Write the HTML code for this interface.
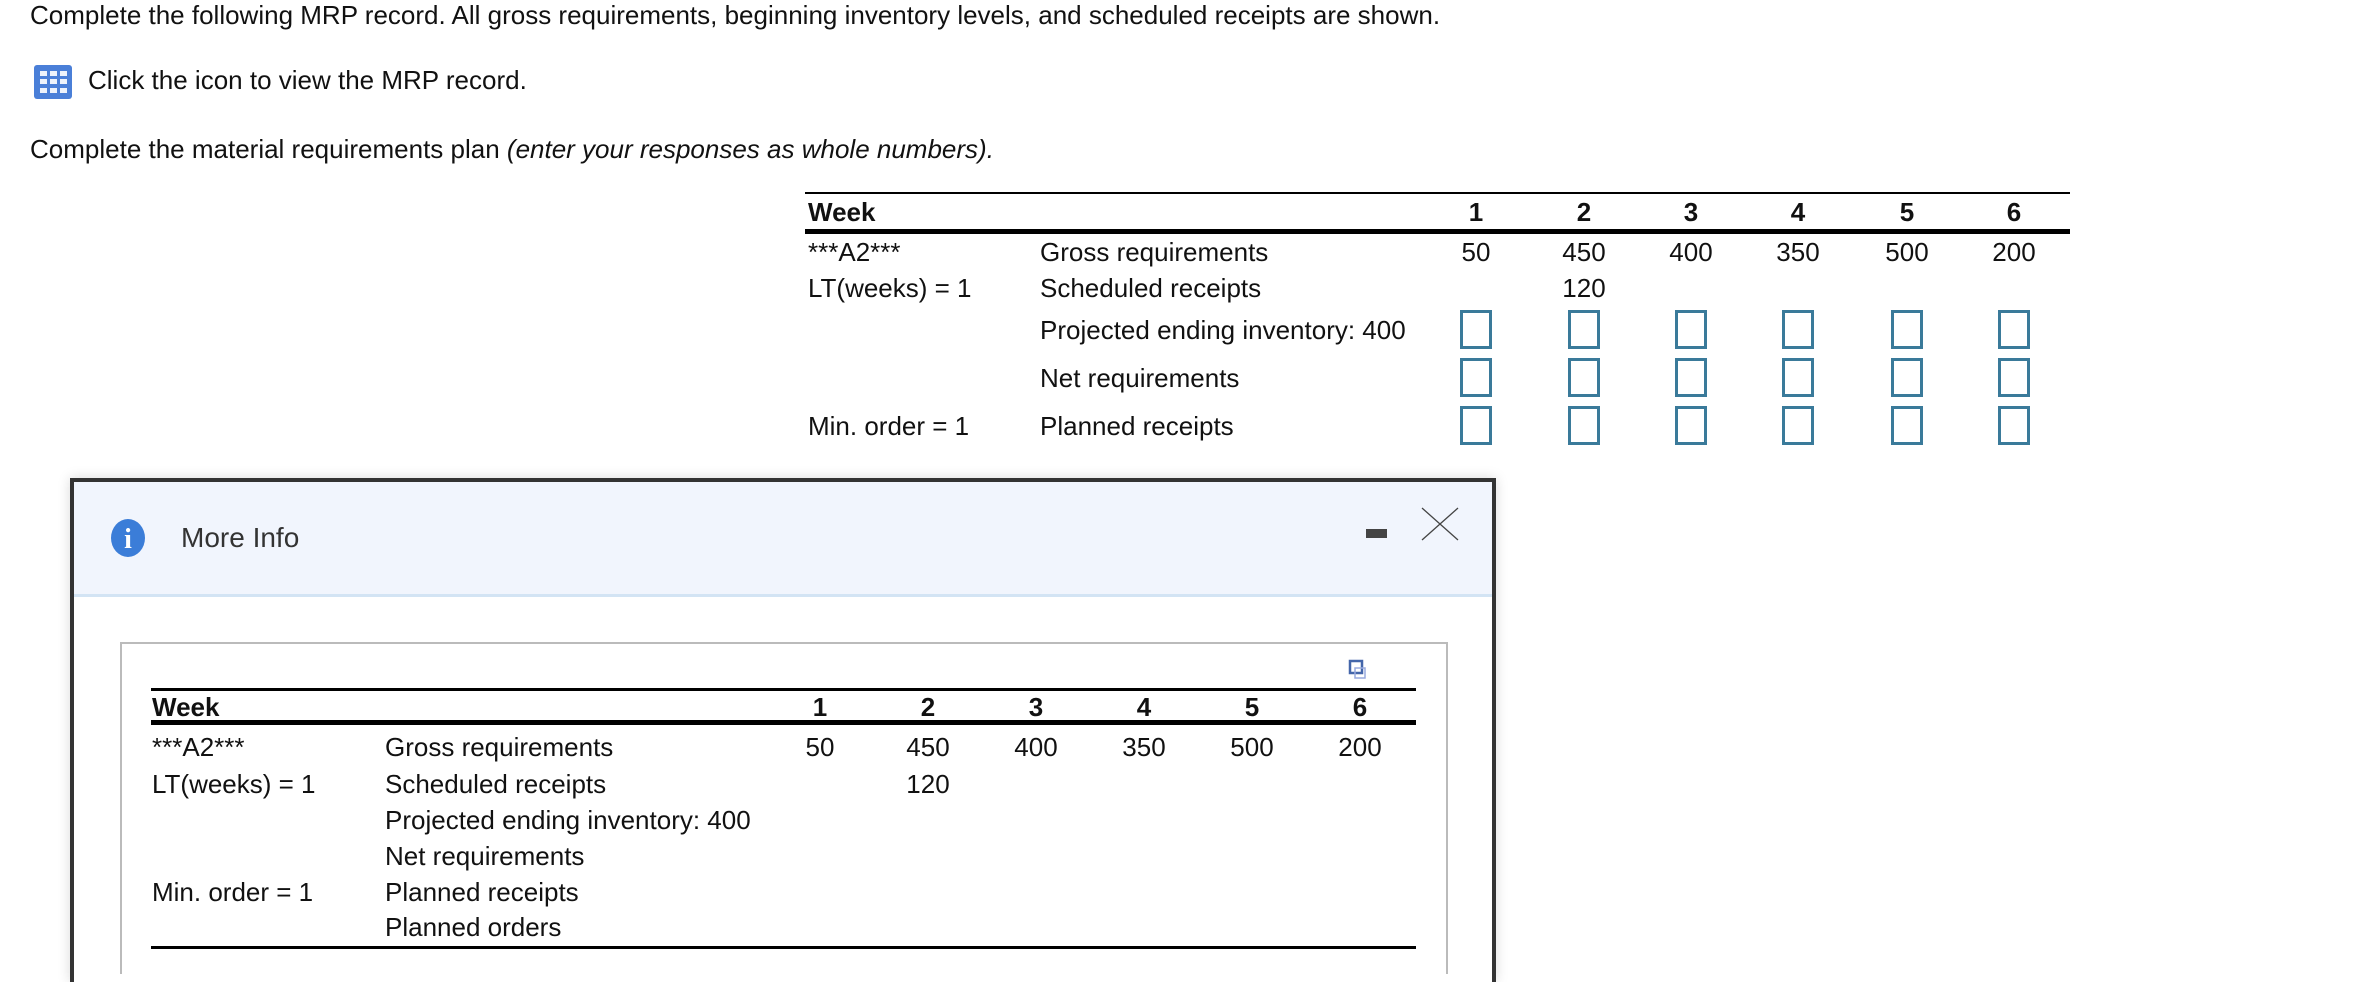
<!DOCTYPE html>
<html><head><meta charset="utf-8"><style>
body{margin:0;width:2370px;height:958px;background:#fff;position:relative;overflow:hidden;font-family:"Liberation Sans",Arial,sans-serif;color:#111;font-size:26px}
.t{position:absolute;white-space:nowrap;line-height:1}
.b{font-weight:bold}
.c{transform:translateX(-50%)}
.box{position:absolute;width:26px;height:33px;border:3px solid #3a7a9a;background:#fff}
.ln{position:absolute;background:#000}
</style></head><body>
<div class="t" style="left:30px;top:2px">Complete the following MRP record. All gross requirements, beginning inventory levels, and scheduled receipts are shown.</div>
<svg style="position:absolute;left:34px;top:65px" width="38" height="34" viewBox="0 0 38 34"><rect width="38" height="34" rx="3" fill="#4a7fd8"/><g fill="#fff" opacity=".9"><rect x="6" y="6" width="7" height="5"/><rect x="16" y="6" width="7" height="5"/><rect x="26" y="6" width="7" height="5"/><rect x="6" y="14" width="7" height="5"/><rect x="16" y="14" width="7" height="5"/><rect x="26" y="14" width="7" height="5"/><rect x="6" y="23" width="7" height="5"/><rect x="16" y="23" width="7" height="5"/><rect x="26" y="23" width="7" height="5"/></g></svg>
<div class="t" style="left:88px;top:67px">Click the icon to view the MRP record.</div>
<div class="t" style="left:30px;top:136px">Complete the material requirements plan <i>(enter your responses as whole numbers).</i></div>

<div class="ln" style="left:805px;top:192px;width:1265px;height:2px"></div>
<div class="t b" style="left:808px;top:199px">Week</div>
<div class="ln" style="left:805px;top:229px;width:1265px;height:5px"></div>
<div class="t" style="left:808px;top:239px">***A2***</div>
<div class="t" style="left:808px;top:275px">LT(weeks) = 1</div>
<div class="t" style="left:808px;top:413px">Min. order = 1</div>
<div class="t" style="left:1040px;top:239px">Gross requirements</div>
<div class="t" style="left:1040px;top:275px">Scheduled receipts</div>
<div class="t" style="left:1040px;top:317px">Projected ending inventory: 400</div>
<div class="t" style="left:1040px;top:365px">Net requirements</div>
<div class="t" style="left:1040px;top:413px">Planned receipts</div>
<div class="t b c" style="left:1476px;top:199px">1</div><div class="t b c" style="left:1584px;top:199px">2</div><div class="t b c" style="left:1691px;top:199px">3</div><div class="t b c" style="left:1798px;top:199px">4</div><div class="t b c" style="left:1907px;top:199px">5</div><div class="t b c" style="left:2014px;top:199px">6</div>
<div class="t c" style="left:1476px;top:239px">50</div><div class="t c" style="left:1584px;top:239px">450</div><div class="t c" style="left:1691px;top:239px">400</div><div class="t c" style="left:1798px;top:239px">350</div><div class="t c" style="left:1907px;top:239px">500</div><div class="t c" style="left:2014px;top:239px">200</div>
<div class="t c" style="left:1584px;top:275px">120</div>

<div class="box" style="left:1460px;top:310px"></div><div class="box" style="left:1568px;top:310px"></div><div class="box" style="left:1675px;top:310px"></div><div class="box" style="left:1782px;top:310px"></div><div class="box" style="left:1891px;top:310px"></div><div class="box" style="left:1998px;top:310px"></div>
<div class="box" style="left:1460px;top:358px"></div><div class="box" style="left:1568px;top:358px"></div><div class="box" style="left:1675px;top:358px"></div><div class="box" style="left:1782px;top:358px"></div><div class="box" style="left:1891px;top:358px"></div><div class="box" style="left:1998px;top:358px"></div>
<div class="box" style="left:1460px;top:406px"></div><div class="box" style="left:1568px;top:406px"></div><div class="box" style="left:1675px;top:406px"></div><div class="box" style="left:1782px;top:406px"></div><div class="box" style="left:1891px;top:406px"></div><div class="box" style="left:1998px;top:406px"></div>

<!-- modal -->
<div style="position:absolute;left:70px;top:478px;width:1418px;height:500px;border:4px solid #333;border-bottom:none;background:#fff;box-shadow:0 0 12px rgba(0,0,0,.15)"></div>
<div style="position:absolute;left:74px;top:482px;width:1418px;height:112px;background:#f1f5fd;border-bottom:3px solid #d3e4f4"></div>
<svg style="position:absolute;left:108px;top:518px" width="40" height="40"><ellipse cx="20" cy="20" rx="17" ry="19" fill="#3b7dd8"/><text x="20" y="30" font-family="Liberation Serif" font-weight="bold" font-size="28" fill="#fff" text-anchor="middle">i</text></svg>
<div class="t" style="left:181px;top:524px;font-size:28px;color:#333">More Info</div>
<div style="position:absolute;left:1366px;top:529px;width:21px;height:9px;background:#444"></div>
<svg style="position:absolute;left:1420px;top:507px" width="40" height="34"><path d="M2 1 L38 33 M38 1 L2 33" stroke="#444" stroke-width="1.3" fill="none"/></svg>

<div style="position:absolute;left:120px;top:642px;width:1324px;height:330px;border:2px solid #bbb;border-bottom:none"></div>
<svg style="position:absolute;left:1348px;top:659px" width="20" height="22"><rect x="2" y="2" width="12" height="12" fill="#fff" stroke="#4466aa" stroke-width="2.5"/><rect x="7" y="9" width="10" height="10" fill="none" stroke="#99aadd" stroke-width="1.5"/></svg>
<div class="ln" style="left:151px;top:688px;width:1265px;height:3px"></div>
<div class="t b" style="left:152px;top:694px">Week</div>
<div class="ln" style="left:151px;top:720px;width:1265px;height:5px"></div>
<div class="t" style="left:152px;top:734px">***A2***</div>
<div class="t" style="left:152px;top:771px">LT(weeks) = 1</div>
<div class="t" style="left:152px;top:879px">Min. order = 1</div>
<div class="t" style="left:385px;top:734px">Gross requirements</div>
<div class="t" style="left:385px;top:771px">Scheduled receipts</div>
<div class="t" style="left:385px;top:807px">Projected ending inventory: 400</div>
<div class="t" style="left:385px;top:843px">Net requirements</div>
<div class="t" style="left:385px;top:879px">Planned receipts</div>
<div class="t" style="left:385px;top:914px">Planned orders</div>
<div class="t b c" style="left:820px;top:694px">1</div><div class="t b c" style="left:928px;top:694px">2</div><div class="t b c" style="left:1036px;top:694px">3</div><div class="t b c" style="left:1144px;top:694px">4</div><div class="t b c" style="left:1252px;top:694px">5</div><div class="t b c" style="left:1360px;top:694px">6</div>
<div class="t c" style="left:820px;top:734px">50</div><div class="t c" style="left:928px;top:734px">450</div><div class="t c" style="left:1036px;top:734px">400</div><div class="t c" style="left:1144px;top:734px">350</div><div class="t c" style="left:1252px;top:734px">500</div><div class="t c" style="left:1360px;top:734px">200</div>
<div class="t c" style="left:928px;top:771px">120</div>
<div class="ln" style="left:151px;top:946px;width:1265px;height:3px"></div>
</body></html>
